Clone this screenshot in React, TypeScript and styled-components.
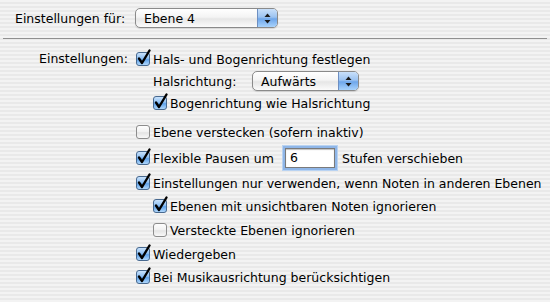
import React from 'react';
import styled, { createGlobalStyle } from 'styled-components';

const GlobalStyle = createGlobalStyle`
  html, body {
    margin: 0;
    padding: 0;
  }
  body {
    font-family: "DejaVu Sans", "Liberation Sans", sans-serif;
    font-size: 12.5px;
    color: #000;
  }
`;

// Aqua pinstripe window background
const Page = styled.div`
  width: 550px;
  height: 302px;
  box-sizing: border-box;
  padding-top: 8px;
  background: repeating-linear-gradient(
    to bottom,
    #f3f3f3 0px,
    #f3f3f3 2px,
    #e9e9e9 2px,
    #e9e9e9 4px
  );
  overflow: hidden;
`;

const Header = styled.div`
  display: flex;
  align-items: center;
  height: 20px;
  padding-left: 15px;
`;

const HeaderLabel = styled.span`
  width: 120px;
`;

const Separator = styled.div`
  margin: 10px 3px 0 3px;
  height: 1px;
  background: #8f8f8f;
`;

const Settings = styled.div`
  display: grid;
  grid-template-columns: 128px 1fr;
  column-gap: 8px;
  padding-top: 9px;
`;

const SideLabel = styled.div`
  text-align: right;
  height: 22px;
  line-height: 22px;
`;

const Options = styled.div`
  display: flex;
  flex-direction: column;
`;

const Row = styled.div<{ $indent?: number; $space?: number }>`
  display: flex;
  align-items: center;
  height: 22px;
  margin-top: ${(p) => p.$space ?? 0}px;
  padding-left: ${(p) => p.$indent ?? 0}px;
  white-space: nowrap;
`;

const CheckLabel = styled.label`
  display: flex;
  align-items: center;
  gap: 3px;
`;

const Box = styled.span`
  position: relative;
  display: inline-block;
  width: 14px;
  height: 14px;
  flex: none;

  svg {
    position: absolute;
    left: 0;
    top: -3px;
    overflow: visible;
  }
`;

const PopupShell = styled.div<{ $width: number }>`
  position: relative;
  display: flex;
  align-items: center;
  width: ${(p) => p.$width}px;
  height: 20px;
  box-sizing: border-box;
  border: 1px solid #8a8a8a;
  border-radius: 5px;
  background: linear-gradient(to bottom, #ffffff 0%, #f4f4f4 45%, #e6e6e6 55%, #fbfbfb 100%);
  box-shadow: 0 1px 1px rgba(0, 0, 0, 0.12);
  overflow: hidden;
`;

const PopupText = styled.span`
  flex: 1;
  padding-left: 8px;
`;

const PopupArrows = styled.span`
  display: flex;
  align-items: center;
  justify-content: center;
  width: 19px;
  height: 100%;
  border-left: 1px solid #6d8fc2;
  background: linear-gradient(to bottom, #c9e0fa 0%, #9cc3f1 45%, #6ea6ea 55%, #a9d3fc 100%);
`;

const GapText = styled.span<{ $width?: number }>`
  display: inline-block;
  width: ${(p) => (p.$width ? `${p.$width}px` : 'auto')};
`;

const Field = styled.div`
  width: 50px;
  height: 20px;
  box-sizing: border-box;
  margin: 0 7px 0 0;
  padding-left: 4px;
  line-height: 18px;
  border: 1px solid #7a7a7a;
  background: #fff;
  box-shadow: 0 0 0 2px #8fb6e8, 0 0 0 3px #b9d3f2, inset 0 1px 1px rgba(0, 0, 0, 0.25);
`;

const Checkbox = ({ checked, children }: { checked?: boolean; children: React.ReactNode }) => (
  <CheckLabel>
    <Box>
      <svg width="16" height="17" viewBox="0 -3 16 17">
        <defs>
          <linearGradient id="cbOn" x1="0" y1="0" x2="0" y2="1">
            <stop offset="0" stopColor="#cfe6fd" />
            <stop offset="0.45" stopColor="#8fc0f3" />
            <stop offset="0.55" stopColor="#5fa2ea" />
            <stop offset="1" stopColor="#b7dcfd" />
          </linearGradient>
          <linearGradient id="cbOff" x1="0" y1="0" x2="0" y2="1">
            <stop offset="0" stopColor="#ffffff" />
            <stop offset="0.5" stopColor="#f1f1f1" />
            <stop offset="0.55" stopColor="#e4e4e4" />
            <stop offset="1" stopColor="#fafafa" />
          </linearGradient>
        </defs>
        <rect
          x="0.5"
          y="0.5"
          width="13"
          height="13"
          rx="2.5"
          fill={checked ? 'url(#cbOn)' : 'url(#cbOff)'}
          stroke={checked ? '#48698f' : '#8c8c8c'}
        />
        {checked && (
          <path
            d="M3 6.5 L6 11 L13.5 -1.5"
            fill="none"
            stroke="#000"
            strokeWidth="2.4"
            strokeLinecap="round"
            strokeLinejoin="round"
          />
        )}
      </svg>
    </Box>
    <span>{children}</span>
  </CheckLabel>
);

const Popup = ({ value, width }: { value: string; width: number }) => (
  <PopupShell $width={width}>
    <PopupText>{value}</PopupText>
    <PopupArrows>
      <svg width="7" height="11" viewBox="0 0 7 11">
        <path d="M3.5 0.5 L6.5 4 L0.5 4 Z" fill="#1a1a1a" />
        <path d="M3.5 10.5 L6.5 7 L0.5 7 Z" fill="#1a1a1a" />
      </svg>
    </PopupArrows>
  </PopupShell>
);

const App = () => {
  return (
    <Page>
      <GlobalStyle />
      <Header>
        <HeaderLabel>Einstellungen für:</HeaderLabel>
        <Popup value="Ebene 4" width={143} />
      </Header>
      <Separator />
      <Settings>
        <SideLabel>Einstellungen:</SideLabel>
        <Options>
          <Row>
            <Checkbox checked>Hals- und Bogenrichtung festlegen</Checkbox>
          </Row>
          <Row $indent={17}>
            <GapText $width={99}>Halsrichtung:</GapText>
            <Popup value="Aufwärts" width={107} />
          </Row>
          <Row $indent={17}>
            <Checkbox checked>Bogenrichtung wie Halsrichtung</Checkbox>
          </Row>
          <Row $space={7}>
            <Checkbox>Ebene verstecken (sofern inaktiv)</Checkbox>
          </Row>
          <Row $space={4}>
            <Checkbox checked>
              <GapText $width={132}>Flexible Pausen um</GapText>
            </Checkbox>
            <Field>6</Field>
            <span>Stufen verschieben</span>
          </Row>
          <Row $space={3}>
            <Checkbox checked>Einstellungen nur verwenden, wenn Noten in anderen Ebenen</Checkbox>
          </Row>
          <Row $indent={17} $space={1}>
            <Checkbox checked>Ebenen mit unsichtbaren Noten ignorieren</Checkbox>
          </Row>
          <Row $indent={17} $space={2}>
            <Checkbox>Versteckte Ebenen ignorieren</Checkbox>
          </Row>
          <Row $space={2}>
            <Checkbox checked>Wiedergeben</Checkbox>
          </Row>
          <Row $space={1}>
            <Checkbox checked>Bei Musikausrichtung berücksichtigen</Checkbox>
          </Row>
        </Options>
      </Settings>
    </Page>
  );
};

export default App;
